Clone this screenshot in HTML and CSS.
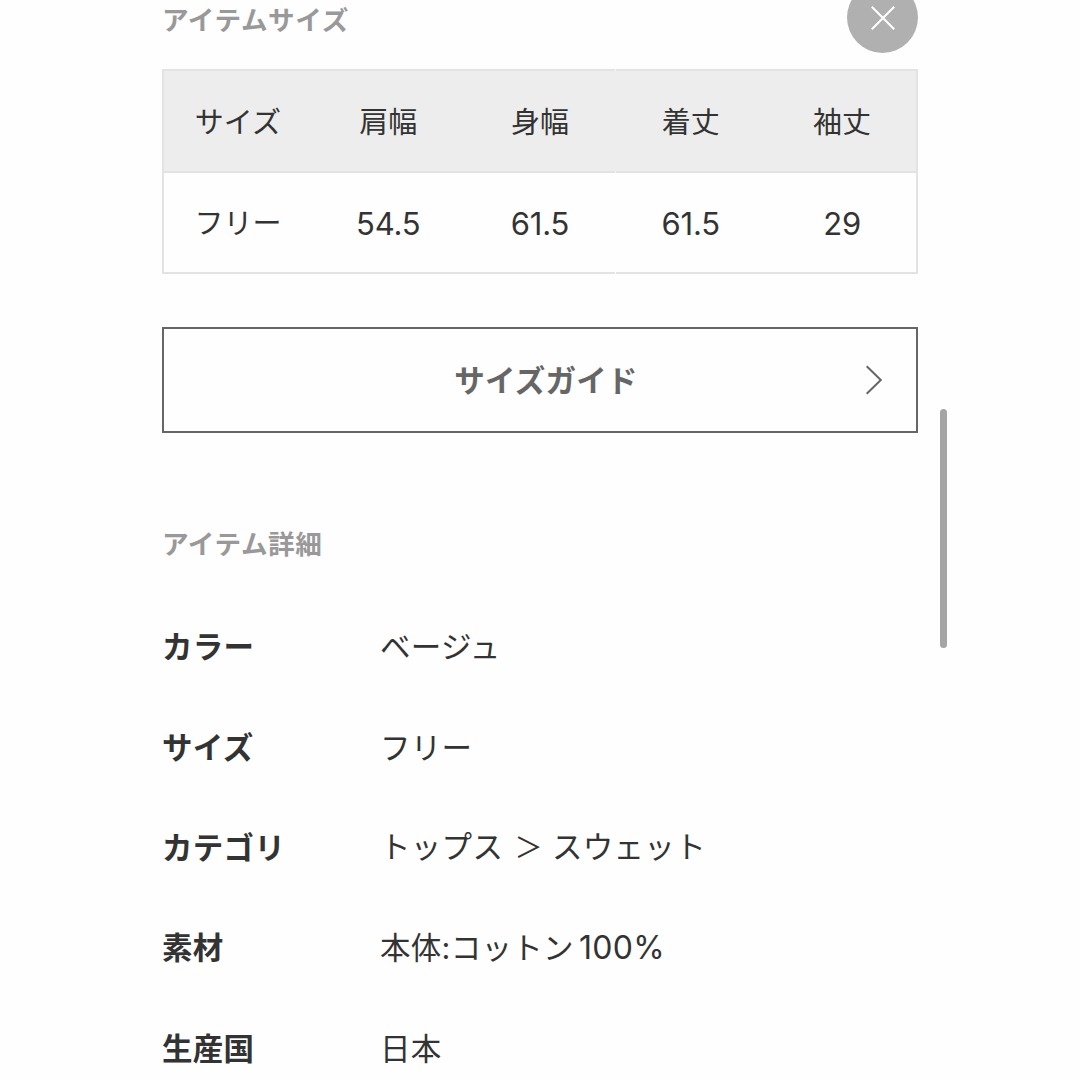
FILE: index.html
```html
<!DOCTYPE html>
<html lang="ja">
<head>
<meta charset="utf-8">
<title>アイテムサイズ</title>
<link rel="stylesheet" href="styles.css">
</head>
<body>
<main class="page">
  <h2 class="heading">アイテムサイズ</h2>
  <table class="size-table">
    <thead>
      <tr><th>サイズ</th><th>肩幅</th><th>身幅</th><th>着丈</th><th>袖丈</th></tr>
    </thead>
    <tbody>
      <tr><td>フリー</td><td class="num">54.5</td><td class="num">61.5</td><td class="num">61.5</td><td class="num">29</td></tr>
    </tbody>
  </table>
  <a class="guide">
    <span class="guide-label">サイズガイド</span>
    <svg class="chevron" viewBox="0 0 18 30" fill="none" stroke="currentColor" stroke-width="2"><path d="M1.7 1.3 15.8 15 1.7 28.7"/></svg>
  </a>
  <h2 class="heading">アイテム詳細</h2>
  <dl class="details">
    <dt>カラー</dt><dd>ベージュ</dd>
    <dt>サイズ</dt><dd>フリー</dd>
    <dt>カテゴリ</dt><dd>トップス <span class="arrow">＞</span> スウェット</dd>
    <dt>素材</dt><dd>本体:コットン<span class="percent">100%</span></dd>
    <dt>生産国</dt><dd>日本</dd>
  </dl>
</main>
<button class="close" aria-label="閉じる">
  <svg class="close-icon" viewBox="0 0 24 24" fill="none" stroke="currentColor" stroke-width="2"><path d="M.8.8 23.2 23.2M23.2.8.8 23.2"/></svg>
</button>
<div class="scrollbar"></div>
</body>
</html>
```

FILE: styles.css
```css
* { box-sizing: border-box; }

body {
  margin: 0;
  height: 1080px;
  overflow: hidden;
  position: relative;
  background: #fefefe;
  color: #333;
  font-family: Inter, "Noto Sans CJK JP", sans-serif;
  font-size: 30.5px;
}

.page {
  width: 756px;
  margin: 0 auto;
}

.heading {
  margin: 0;
  height: 40px;
  line-height: 40px;
  color: #999;
  font-size: 26.6px;
  font-weight: 700;
  letter-spacing: .6px;
}

.size-table {
  position: relative;
  width: 100%;
  height: 205px;
  margin-top: 29px;
  table-layout: fixed;
  border-collapse: collapse;
  border: 2px solid #e3e3e3;
  font-size: 29px;
}

/* hairline break in the horizontal rules between columns */
.size-table::after {
  content: "";
  position: absolute;
  left: 452px;
  top: -1px;
  bottom: -1px;
  width: 1px;
  background: linear-gradient(#f3f3f3 2px, transparent 2px 102px, #f3f3f3 102px 104px, transparent 104px calc(100% - 2px), #fefefe calc(100% - 2px));
}

.size-table th,
.size-table td {
  height: 100px;
  padding: 2px 2px 0 0;
  line-height: 40px;
  font-weight: 400;
  text-align: center;
  vertical-align: middle;
}

.size-table th {
  height: 102px;
  padding-top: 3px;
  background: #ededed;
  border-bottom: 2px solid #e3e3e3;
}

.size-table th:nth-child(n + 3),
.size-table td:nth-child(n + 3) { padding-right: 0; }

.size-table th:last-child,
.size-table td:last-child { padding-left: 2px; }

.size-table .num {
  font-size: 31px;
  letter-spacing: -.2px;
}

.guide {
  display: grid;
  grid-template-columns: 52px 1fr 51px;
  align-items: center;
  height: 106px;
  margin-top: 53px;
  margin-bottom: 91px;
  border: 2px solid #666;
  color: #666;
}

.guide-label {
  grid-column: 2;
  padding: 0 0 2px 11px;
  text-align: center;
  font-weight: 700;
  letter-spacing: .2px;
}

.chevron {
  width: 18px;
  height: 30px;
}

.details {
  display: grid;
  grid-template-columns: 218px 1fr;
  grid-auto-rows: 100.4px;
  align-items: center;
  margin: 33px 0 0;
  line-height: 40px;
  letter-spacing: .3px;
}

.details dt { font-weight: 700; }
.details dd { margin: 0; white-space: nowrap; }
.arrow { display: inline-block; width: 31px; font-size: 28px; text-align: center; letter-spacing: 0; padding-left: 2px; }
.percent { margin-left: 5px; font-size: 32px; }

.close {
  position: absolute;
  left: 847px;
  top: -18px;
  width: 71px;
  height: 71px;
  display: grid;
  place-items: center;
  padding: 0;
  border: 0;
  border-radius: 50%;
  background: #b0b0b0;
  color: #fff;
}

.close-icon {
  width: 24px;
  height: 24px;
}

.scrollbar {
  position: absolute;
  left: 940px;
  top: 409px;
  width: 7px;
  height: 239px;
  border-radius: 4px;
  background: #a5a5a5;
}
```
